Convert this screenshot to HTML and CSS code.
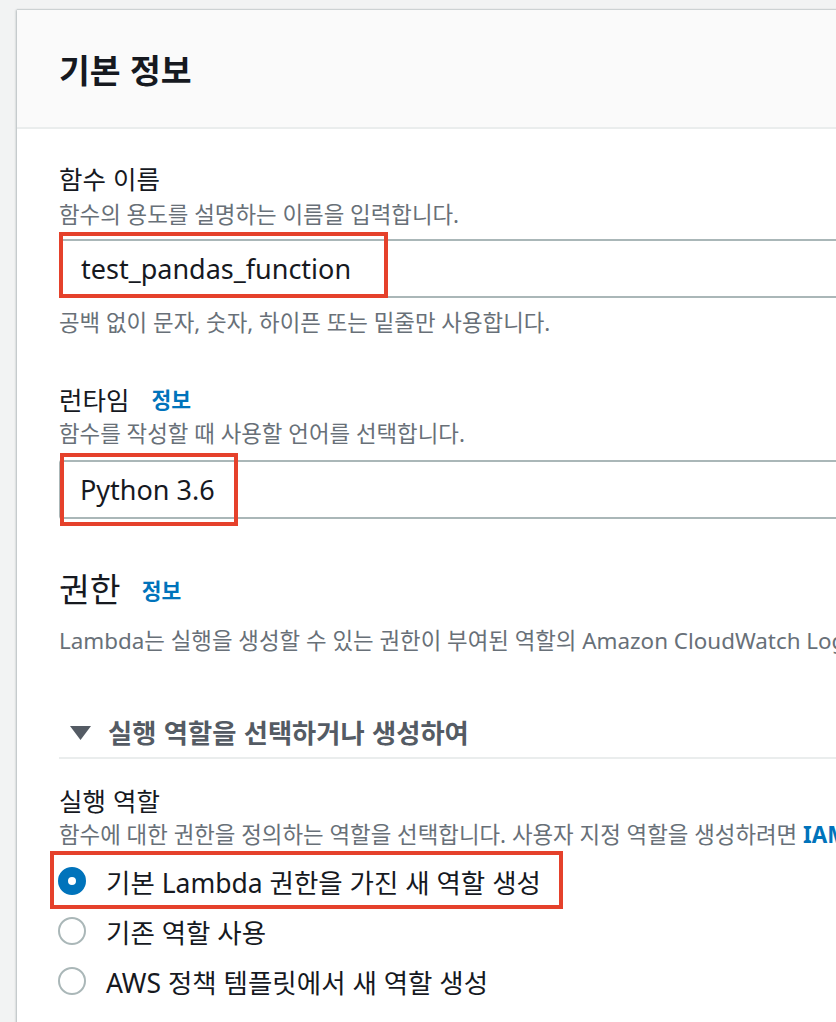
FILE: index.html
```html
<!DOCTYPE html>
<html lang="ko">
<head>
<meta charset="utf-8">
<title>기본 정보</title>
<link rel="stylesheet" href="styles.css">
</head>
<body>
<div class="page">
  <section class="panel">
    <header class="panel-header">
      <h2 class="panel-title">기본 정보</h2>
    </header>
    <div class="panel-body">
      <div class="field">
        <div class="label">함수 이름</div>
        <div class="desc">함수의 용도를 설명하는 이름을 입력합니다.</div>
        <div class="input">test_pandas_function</div>
        <div class="hint">공백 없이 문자, 숫자, 하이픈 또는 밑줄만 사용합니다.</div>
      </div>

      <div class="field runtime">
        <div class="label">런타임<a class="info">정보</a></div>
        <div class="desc">함수를 작성할 때 사용할 언어를 선택합니다.</div>
        <div class="input select">Python 3.6</div>
      </div>

      <h3 class="section-title">권한<a class="info">정보</a></h3>
      <div class="desc section-desc">Lambda는 실행을 생성할 수 있는 권한이 부여된 역할의 Amazon CloudWatch Logs에 로그를 업로드할 수 있는 권한이 필요합니다.</div>

      <div class="expander">
        <svg class="caret" width="21" height="14" viewBox="0 0 21 14"><polygon points="0,0 21,0 10.5,14" fill="#545b64"/></svg>
        <span>실행 역할을 선택하거나 생성하여</span>
      </div>

      <div class="field role">
        <div class="label">실행 역할</div>
        <div class="desc">함수에 대한 권한을 정의하는 역할을 선택합니다. 사용자 지정 역할을 생성하려면 <a class="link">IAM 콘솔</a>로 이동하십시오.</div>
        <div class="radios">
          <div class="radio-row"><span class="radio checked"></span><span>기본 Lambda 권한을 가진 새 역할 생성</span></div>
          <div class="radio-row"><span class="radio"></span><span>기존 역할 사용</span></div>
          <div class="radio-row"><span class="radio"></span><span>AWS 정책 템플릿에서 새 역할 생성</span></div>
        </div>
      </div>
    </div>
  </section>

  <div class="mark mark-name"></div>
  <div class="mark mark-runtime"></div>
  <div class="mark mark-role"></div>
</div>
</body>
</html>
```

FILE: styles.css
```css
html, body {
  margin: 0;
  padding: 0;
  overflow: hidden;
  background: #f2f3f3;
}
body {
  width: 836px;
  height: 1022px;
  font-family: "Noto Sans", "Noto Sans CJK KR", sans-serif;
  color: #16191f;
}
.page {
  position: relative;
  width: 836px;
  height: 1022px;
  overflow: hidden;
  padding: 10px 0 0 17px;
  box-sizing: border-box;
}
.panel {
  width: 1000px;
  min-height: 1100px;
  background: #fff;
  box-shadow: -1px 0 2px rgba(0,28,36,0.25), 0 -1px 1px rgba(0,28,36,0.08);
}
.panel-header {
  height: 117px;
  background: #fafafa;
  border-bottom: 2px solid #eaeded;
  display: flex;
  align-items: center;
  padding-left: 42px;
}
.panel-title {
  margin: 0;
  font-family: "Noto Sans CJK KR", sans-serif;
  font-size: 33.5px;
  font-weight: 700;
  line-height: 40px;
  color: #16191f;
}
.panel-body {
  padding: 34px 0 0 42px;
  display: flex;
  flex-direction: column;
}
.label {
  font-family: "Noto Sans CJK KR", sans-serif;
  font-size: 25.5px;
  line-height: 30px;
  height: 30px;
  display: flex;
  align-items: center;
  white-space: nowrap;
}
.desc {
  font-family: "Noto Sans", "Noto Sans CJK KR", sans-serif;
  font-size: 22.4px;
  line-height: 26px;
  height: 26px;
  color: #687078;
  margin-top: 9px;
  white-space: nowrap;
}
.info {
  color: #0073bb;
  font-family: "Noto Sans CJK KR", sans-serif;
  font-weight: 700;
  font-size: 21.5px;
  line-height: 30px;
  margin-left: 22px;
  text-decoration: none;
}
.link {
  color: #0073bb;
  font-weight: 700;
  text-decoration: none;
}
.input {
  margin-top: 11px;
  height: 59px;
  box-sizing: border-box;
  border: 2px solid #aab7b8;
  border-right: none;
  border-radius: 3px 0 0 3px;
  display: flex;
  align-items: center;
  padding-left: 20px;
  font-size: 27px;
  color: #16191f;
}
.hint {
  margin-top: 12px;
  font-size: 22.4px;
  line-height: 26px;
  height: 26px;
  color: #687078;
  white-space: nowrap;
}
.runtime {
  margin-top: 48px;
}
.runtime .desc {
  margin-top: 7px;
}
.select {
  margin-top: 13px;
  padding-left: 19px;
}
.section-title {
  margin: 51px 0 0;
  height: 36px;
  font-family: "Noto Sans CJK KR", sans-serif;
  font-weight: 400;
  font-size: 33.5px;
  line-height: 36px;
  display: flex;
  align-items: center;
  white-space: nowrap;
}
.section-title .info {
  margin-left: 21px;
  margin-top: 4px;
}
.section-desc {
  margin-top: 22px;
}
.expander {
  margin-top: 62px;
  display: flex;
  align-items: center;
  height: 32px;
  padding: 0 0 9px 11px;
  border-bottom: 2px solid #eaeded;
  font-family: "Noto Sans CJK KR", sans-serif;
  font-weight: 700;
  font-size: 26.3px;
  line-height: 32px;
  color: #545b64;
  white-space: nowrap;
}
.caret {
  margin-right: 17px;
  margin-top: 2px;
  flex: none;
}
.role {
  margin-top: 26px;
}
.role .desc {
  margin-top: 7px;
}
.radios {
  margin-top: 8px;
  display: flex;
  flex-direction: column;
}
.radio-row {
  height: 50px;
  display: flex;
  align-items: center;
  gap: 20px;
  font-size: 26.5px;
  color: #16191f;
  white-space: nowrap;
}
.radio {
  flex: none;
  width: 28px;
  height: 28px;
  box-sizing: border-box;
  border-radius: 50%;
  border: 2px solid #aab7b8;
  margin-left: -1px;
  background: #fff;
}
.radio.checked {
  border: 10px solid #0073bb;
}
.mark {
  position: absolute;
  border: 4px solid #e5412b;
  box-sizing: border-box;
}
.mark-name {
  left: 59px;
  top: 232px;
  width: 329px;
  height: 66px;
}
.mark-runtime {
  left: 60px;
  top: 453px;
  width: 178px;
  height: 73px;
}
.mark-role {
  left: 50px;
  top: 851px;
  width: 513px;
  height: 58px;
}
```
